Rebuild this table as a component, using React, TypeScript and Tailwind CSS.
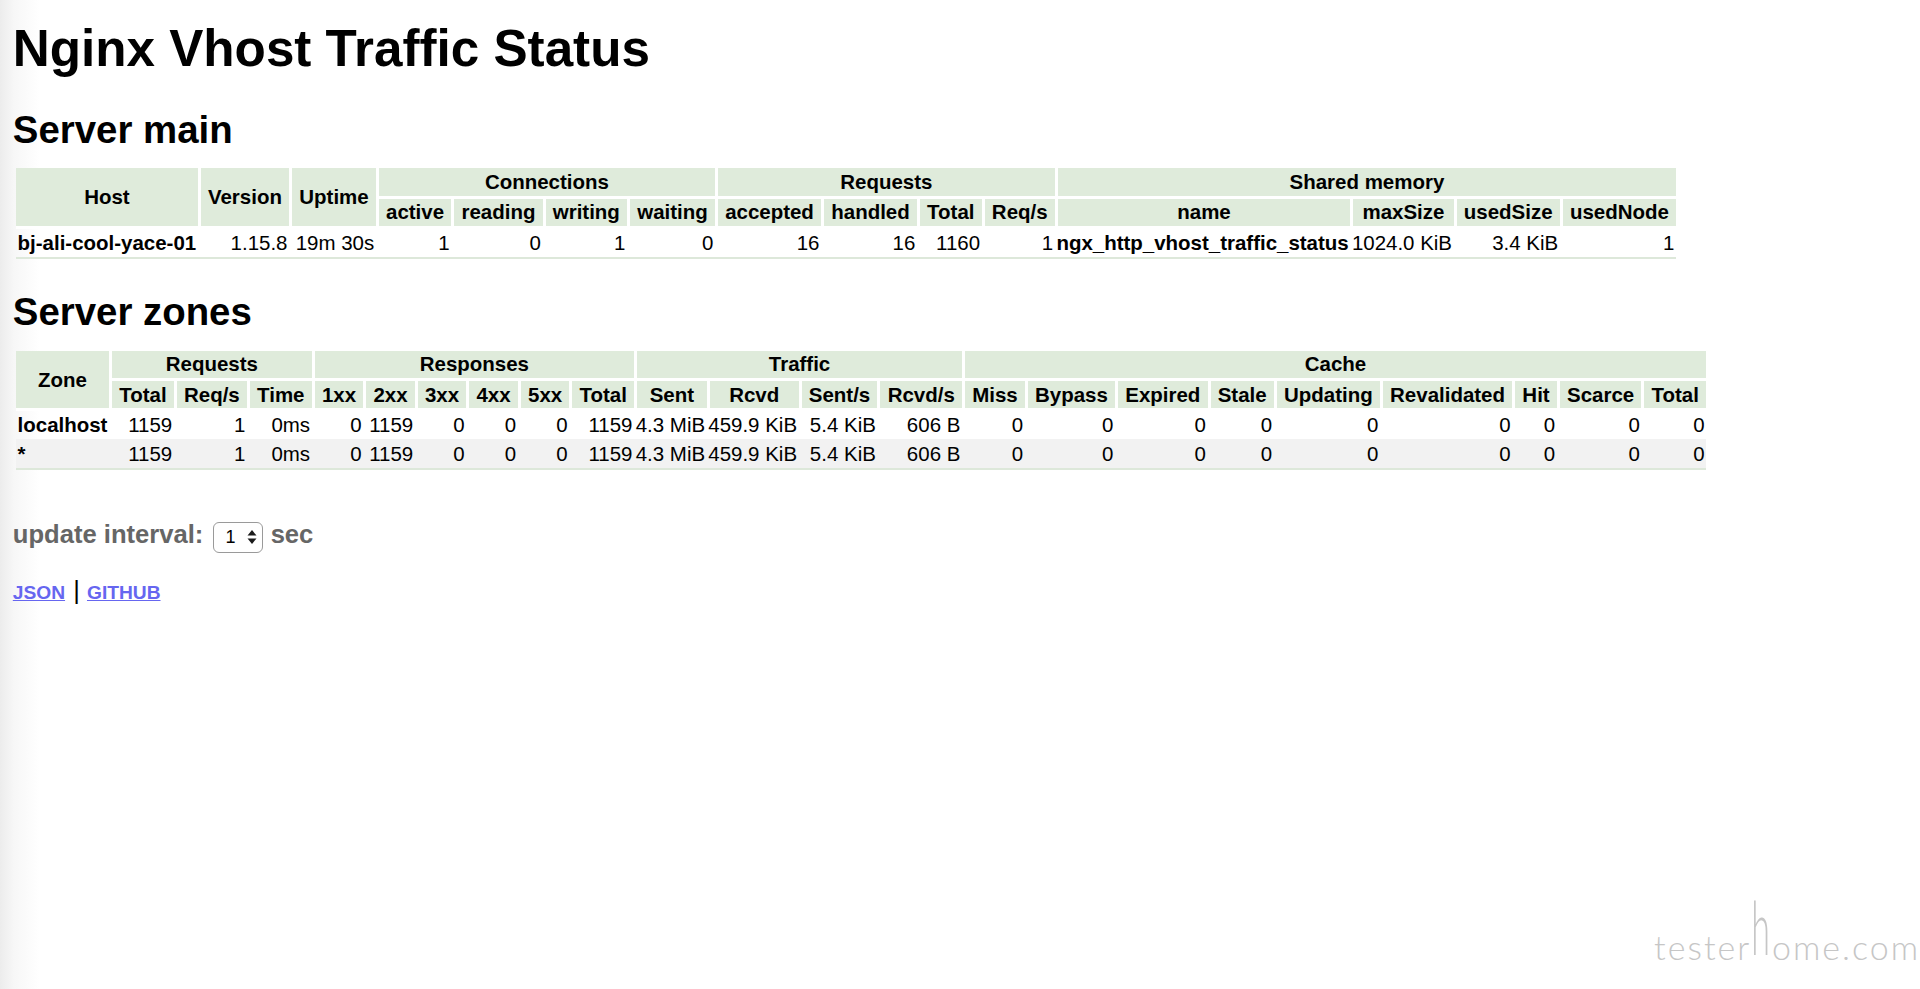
import React from "react";

type ThProps = {
  children: React.ReactNode;
  first?: boolean;
  rowSpan?: number;
  colSpan?: number;
};

function Th({ children, first = false, rowSpan, colSpan }: ThProps) {
  const cls = first
    ? "border-b-[3px] border-white bg-[#dfebdb] px-[7.2px] py-[1.9px] text-center align-middle font-bold whitespace-nowrap"
    : "border-b-[3px] border-l-[3px] border-white bg-[#dfebdb] px-[7.2px] py-[1.9px] text-center align-middle font-bold whitespace-nowrap";
  return (
    <th rowSpan={rowSpan} colSpan={colSpan} className={cls}>
      {children}
    </th>
  );
}

type TdProps = {
  children: React.ReactNode;
  left?: boolean;
  gray?: boolean;
};

function Td({ children, left = false, gray = false }: TdProps) {
  let cls = "px-[1.6px] py-[2.4px] whitespace-nowrap text-right font-normal";
  if (left && gray) cls = "px-[1.6px] py-[2.4px] whitespace-nowrap text-left font-bold bg-[#f2f2f2]";
  else if (left) cls = "px-[1.6px] py-[2.4px] whitespace-nowrap text-left font-bold";
  else if (gray) cls = "px-[1.6px] py-[2.4px] whitespace-nowrap text-right font-normal bg-[#f2f2f2]";
  return <td className={cls}>{children}</td>;
}

const zoneRows = [
  {
    name: "localhost",
    vals: ["1159", "1", "0ms", "0", "1159", "0", "0", "0", "1159", "4.3 MiB", "459.9 KiB", "5.4 KiB", "606 B", "0", "0", "0", "0", "0", "0", "0", "0", "0"],
  },
  {
    name: "*",
    vals: ["1159", "1", "0ms", "0", "1159", "0", "0", "0", "1159", "4.3 MiB", "459.9 KiB", "5.4 KiB", "606 B", "0", "0", "0", "0", "0", "0", "0", "0", "0"],
  },
];

const zoneSub = [
  "Total", "Req/s", "Time",
  "1xx", "2xx", "3xx", "4xx", "5xx", "Total",
  "Sent", "Rcvd", "Sent/s", "Rcvd/s",
  "Miss", "Bypass", "Expired", "Stale", "Updating", "Revalidated", "Hit", "Scarce", "Total",
];

const mainSub = [
  "active", "reading", "writing", "waiting",
  "accepted", "handled", "Total", "Req/s",
];

const memSub = ["name", "maxSize", "usedSize", "usedNode"];

export default function App() {
  return (
    <div className="relative min-h-screen overflow-hidden bg-[linear-gradient(to_right,#ececec_0px,#f7f7f7_14px,#ffffff_40px)] pl-[12.8px] pt-[19.5px] font-['Liberation_Sans',Arial,Helvetica,sans-serif] text-black">
      <h1 className="m-0 text-[51.2px] font-bold leading-[58.8px]">Nginx Vhost Traffic Status</h1>

      <h2 className="mt-[29.8px] text-[38.4px] font-bold leading-[44.1px]">Server main</h2>

      <table className="mt-[16.1px] ml-[3.2px] border-separate border-spacing-0 border-b-2 border-[#dde8da] text-[20.48px] leading-[23.5px]">
        <thead>
          <tr>
            <Th first rowSpan={2}>Host</Th>
            <Th rowSpan={2}>Version</Th>
            <Th rowSpan={2}>Uptime</Th>
            <Th colSpan={4}>Connections</Th>
            <Th colSpan={4}>Requests</Th>
            <Th colSpan={4}>Shared memory</Th>
          </tr>
          <tr>
            {mainSub.map((h, i) => (
              <Th key={"m" + i}>{h}</Th>
            ))}
            {memSub.map((h, i) => (
              <Th key={"s" + i}>{h}</Th>
            ))}
          </tr>
        </thead>
        <tbody>
          <tr>
            <Td left>bj-ali-cool-yace-01</Td>
            <Td>1.15.8</Td>
            <Td>19m 30s</Td>
            <Td>1</Td>
            <Td>0</Td>
            <Td>1</Td>
            <Td>0</Td>
            <Td>16</Td>
            <Td>16</Td>
            <Td>1160</Td>
            <Td>1</Td>
            <Td left>ngx_http_vhost_traffic_status</Td>
            <Td>1024.0 KiB</Td>
            <Td>3.4 KiB</Td>
            <Td>1</Td>
          </tr>
        </tbody>
      </table>

      <h2 className="mt-[31px] text-[38.4px] font-bold leading-[44.1px]">Server zones</h2>

      <table className="mt-[16.3px] ml-[3.2px] border-separate border-spacing-0 border-b-2 border-[#dde8da] text-[20.48px] leading-[23.5px]">
        <thead>
          <tr>
            <Th first rowSpan={2}>Zone</Th>
            <Th colSpan={3}>Requests</Th>
            <Th colSpan={6}>Responses</Th>
            <Th colSpan={4}>Traffic</Th>
            <Th colSpan={9}>Cache</Th>
          </tr>
          <tr>
            {zoneSub.map((h, i) => (
              <Th key={"z" + i}>{h}</Th>
            ))}
          </tr>
        </thead>
        <tbody>
          {zoneRows.map((r, ri) => (
            <tr key={r.name}>
              <Td left gray={ri % 2 === 1}>{r.name}</Td>
              {r.vals.map((v, vi) => (
                <Td key={vi} gray={ri % 2 === 1}>{v}</Td>
              ))}
            </tr>
          ))}
        </tbody>
      </table>

      <div className="mt-[45.8px] text-[25.6px] font-bold text-[#666666]">
        update interval:{" "}
        <span className="relative ml-[2px] inline-flex h-[31px] w-[50px] items-start rounded-[6px] border border-[#9a9a9a] bg-white align-baseline">
          <span className="pl-[12px] pt-[4px] text-[18px] font-normal leading-[20px] text-black">1</span>
          <svg
            className="absolute right-[5px] top-[6px]"
            width="10"
            height="16"
            viewBox="0 0 10 16"
          >
            <path d="M5 1 L9.5 6.5 L0.5 6.5 Z" fill="#1a1a1a" />
            <path d="M5 15 L9.5 9.5 L0.5 9.5 Z" fill="#1a1a1a" />
          </svg>
        </span>{" "}
        <span className="ml-[1px]">sec</span>
      </div>

      <div className="mt-[17.5px] text-[25.6px] font-bold text-black">
        <a href="#" className="text-[19.2px] text-[#6666f0] underline">JSON</a>{" "}
        <span className="ml-[1px] font-normal">|</span>{" "}
        <a href="#" className="text-[19.2px] text-[#6666f0] underline">GITHUB</a>
      </div>

      <div className="absolute right-0 bottom-[25.5px] font-['Lato','DejaVu_Sans',sans-serif] text-[34px] font-light leading-none tracking-[2px] text-[#c6c6c6]">
        tester<span className="inline-block origin-bottom scale-y-[2.2]">h</span>ome.com
      </div>
    </div>
  );
}
